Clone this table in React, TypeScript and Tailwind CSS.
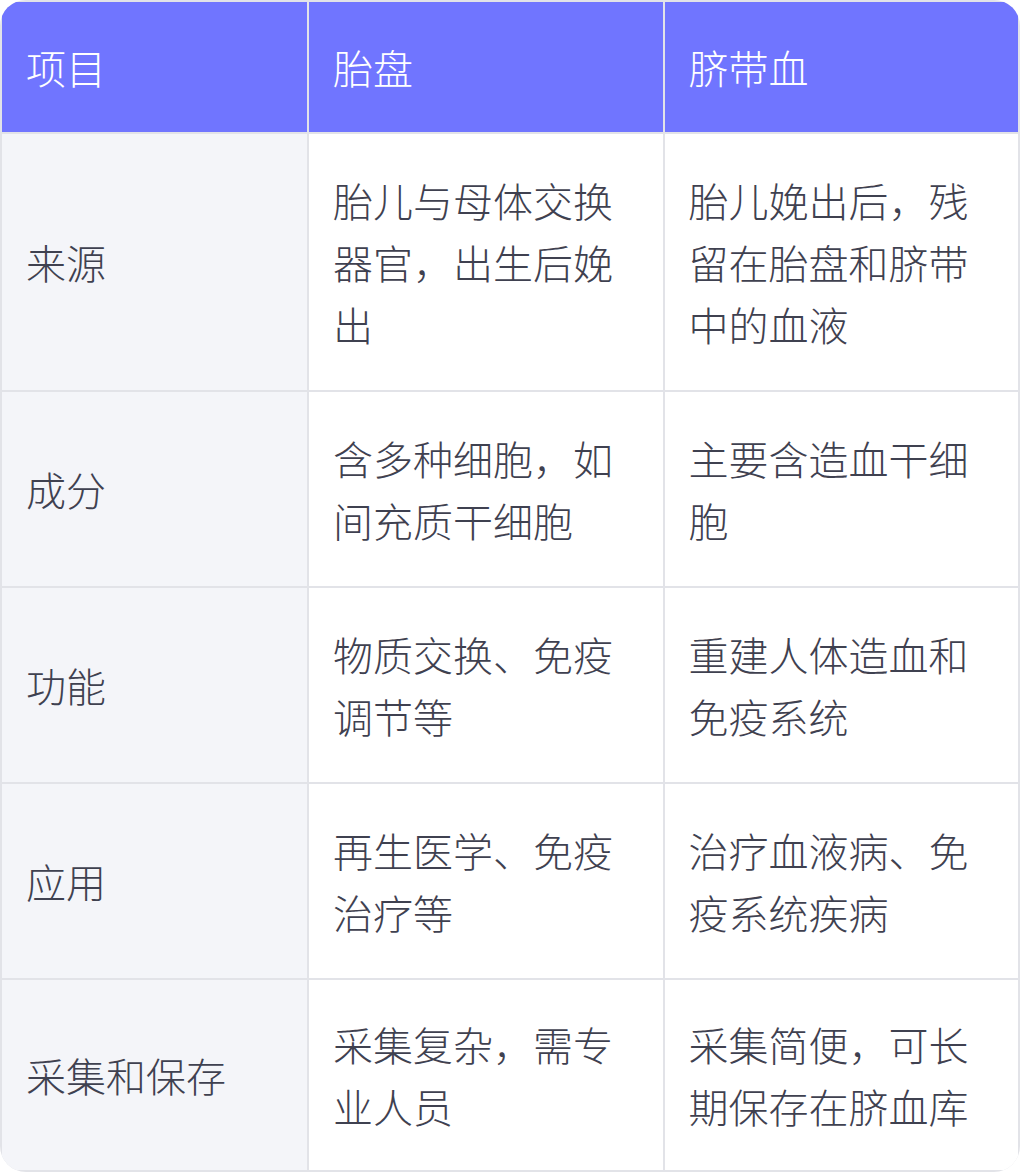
const rows: [string, string, string][] = [
  ["来源", "胎儿与母体交换器官，出生后娩出", "胎儿娩出后，残留在胎盘和脐带中的血液"],
  ["成分", "含多种细胞，如间充质干细胞", "主要含造血干细胞"],
  ["功能", "物质交换、免疫调节等", "重建人体造血和免疫系统"],
  ["应用", "再生医学、免疫治疗等", "治疗血液病、免疫系统疾病"],
  ["采集和保存", "采集复杂，需专业人员", "采集简便，可长期保存在脐血库"],
];

const font = { fontFamily: '"Noto Sans CJK SC", "Noto Sans", sans-serif' };

export default function App() {
  return (
    <div className="w-[1020px] bg-white" style={font}>
      <div className="grid grid-cols-[305px_1fr_1fr] gap-[2px] rounded-[26px] overflow-hidden bg-[#e2e3e8] p-[2px] text-[40px] leading-[62px] font-light">
        <div className="bg-[#7075ff] text-white px-6 py-[34px]">项目</div>
        <div className="bg-[#7075ff] text-white px-6 py-[34px]">胎盘</div>
        <div className="bg-[#7075ff] text-white px-6 py-[34px]">脐带血</div>
        {rows.map((r, i) => {
          const py = i === rows.length - 1 ? "py-[33px]" : "py-[35px]";
          return (
            <div key={i} className="contents">
              <div className={`bg-[#f4f5f9] text-[#3f4150] px-6 flex items-center ${py}`}>{r[0]}</div>
              <div className={`bg-white text-[#3f4150] px-6 flex items-center ${py}`}>{r[1]}</div>
              <div className={`bg-white text-[#3f4150] px-6 flex items-center ${py}`}>{r[2]}</div>
            </div>
          );
        })}
      </div>
    </div>
  );
}
